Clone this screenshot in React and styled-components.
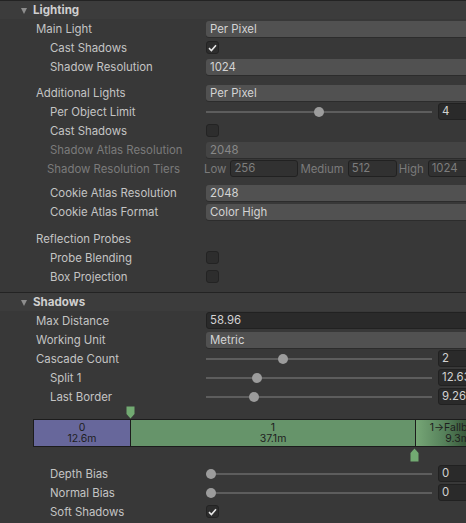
import React from "react";
import styled, { createGlobalStyle } from "styled-components";

const GlobalStyle = createGlobalStyle`
  html, body {
    margin: 0;
    padding: 0;
    background: #383838;
    overflow: hidden;
  }
  body {
    font-family: Inter, "Noto Sans", "Liberation Sans", sans-serif;
    font-size: 11.4px;
    color: #c4c4c4;
  }
`;

const Inspector = styled.div`
  width: 500px;
  background: #383838;
`;

const Header = styled.div`
  height: 18px;
  display: flex;
  align-items: center;
  background: #3c3c3c;
  border-top: 1px solid #232323;
  padding-left: 21px;
  gap: 6px;
  font-weight: 700;
  font-size: 11.6px;
  color: #cfcfcf;
`;

const Arrow = styled.span`
  width: 0;
  height: 0;
  border-left: 3.5px solid transparent;
  border-right: 3.5px solid transparent;
  border-top: 6px solid #8d8d8d;
  margin-top: 1px;
`;

const Body = styled.div`
  padding-bottom: ${(p) => p.$bottom || 0}px;
`;

const Row = styled.div`
  height: 19px;
  display: grid;
  grid-template-columns: 206px 1fr;
  align-items: center;
`;

const Label = styled.div`
  padding-left: ${(p) => p.$indent}px;
  color: ${(p) => (p.$disabled ? "#7b7b7b" : "#c4c4c4")};
  white-space: nowrap;
`;

const Value = styled.div`
  display: flex;
  align-items: center;
  height: 100%;
  margin-left: ${(p) => p.$shift || 0}px;
  min-width: 0;
`;

const Spacer = styled.div`
  height: ${(p) => p.$h}px;
`;

const Dropdown = styled.div`
  flex: 1;
  height: 16px;
  line-height: 16px;
  padding-left: 4px;
  border-radius: 3px;
  background: ${(p) => (p.$disabled ? "#444444" : "#515151")};
  color: ${(p) => (p.$disabled ? "#888888" : "#d4d4d4")};
  white-space: nowrap;
  box-shadow: 0 1px 0 #2c2c2c;
`;

const FloatField = styled.div`
  flex: ${(p) => (p.$width ? "none" : 1)};
  width: ${(p) => (p.$width ? `${p.$width}px` : "auto")};
  box-sizing: border-box;
  height: 17px;
  line-height: 15px;
  padding-left: 3px;
  border: 1px solid #212121;
  border-radius: 3px;
  background: ${(p) => (p.$disabled ? "#313131" : "#2a2a2a")};
  color: ${(p) => (p.$disabled ? "#7d7d7d" : "#d2d2d2")};
  white-space: nowrap;
  overflow: hidden;
`;

const Box = styled.div`
  width: 13px;
  height: 13px;
  box-sizing: border-box;
  border: 1px solid #232323;
  border-radius: 3px;
  background: #2d2d2d;
  display: flex;
  align-items: center;
  justify-content: center;
`;

const Check = ({ on }) => (
  <Box>
    {on && (
      <svg width="9" height="8" viewBox="0 0 9 8">
        <path d="M1 4.2 L3.4 6.5 L8 1.3" fill="none" stroke="#e6e6e6" strokeWidth="1.6" />
      </svg>
    )}
  </Box>
);

const SliderWrap = styled.div`
  flex: 1;
  display: flex;
  align-items: center;
  gap: 6px;
  height: 100%;
`;

const Track = styled.div`
  position: relative;
  flex: 1;
  height: 2px;
  background: #5d5d5d;
`;

const Knob = styled.div`
  position: absolute;
  top: -4px;
  left: ${(p) => p.$pos * 216}px;
  width: 10px;
  height: 10px;
  border-radius: 50%;
  background: #9c9c9c;
`;

const Slider = ({ pos, value }) => (
  <SliderWrap>
    <Track>
      <Knob $pos={pos} />
    </Track>
    <FloatField $width={62}>{value}</FloatField>
  </SliderWrap>
);

const TierLabel = styled.span`
  color: #7b7b7b;
  margin-right: 2px;
`;

const TierGroup = styled.div`
  display: flex;
  align-items: center;
  gap: 2px;
  flex: 1;
  min-width: 0;
`;

const Cascade = styled.div`
  position: relative;
  padding: 13px 0 17px 33px;
`;

const Bar = styled.div`
  display: flex;
  height: 28px;
  box-sizing: border-box;
  border: 1px solid #1c1c1c;
`;

const Segment = styled.div`
  flex: ${(p) => (p.$width ? "none" : 1)};
  width: ${(p) => (p.$width ? `${p.$width}px` : "auto")};
  background: ${(p) => p.$bg};
  border-left: ${(p) => (p.$first ? "none" : "1px solid #1c1c1c")};
  display: flex;
  flex-direction: column;
  align-items: center;
  justify-content: center;
  font-size: 10.5px;
  line-height: 11px;
  color: #1e1e1e;
  white-space: nowrap;
`;

const Marker = styled.svg`
  position: absolute;
  left: ${(p) => p.$x}px;
  top: ${(p) => p.$y}px;
`;

const Field = ({ label, indent = 36, disabled, children, shift }) => (
  <Row>
    <Label $indent={indent} $disabled={disabled}>
      {label}
    </Label>
    <Value $shift={shift}>{children}</Value>
  </Row>
);

export default function App() {
  return (
    <Inspector>
      <GlobalStyle />
      <Header>
        <Arrow />
        Lighting
      </Header>
      <Body $bottom={6}>
        <Field label="Main Light">
          <Dropdown>Per Pixel</Dropdown>
        </Field>
        <Field label="Cast Shadows" indent={50}>
          <Check on />
        </Field>
        <Field label="Shadow Resolution" indent={50}>
          <Dropdown>1024</Dropdown>
        </Field>
        <Spacer $h={7} />
        <Field label="Additional Lights">
          <Dropdown>Per Pixel</Dropdown>
        </Field>
        <Field label="Per Object Limit" indent={50}>
          <Slider pos={0.5} value="4" />
        </Field>
        <Field label="Cast Shadows" indent={50}>
          <Check />
        </Field>
        <Field label="Shadow Atlas Resolution" indent={50} disabled>
          <Dropdown $disabled>2048</Dropdown>
        </Field>
        <Field label="Shadow Resolution Tiers" indent={47} disabled shift={-2}>
          <TierGroup>
            <TierLabel>Low</TierLabel>
            <FloatField $width={68} $disabled>256</FloatField>
            <TierLabel>Medium</TierLabel>
            <FloatField $width={49} $disabled>512</FloatField>
            <TierLabel>High</TierLabel>
            <FloatField $disabled>1024</FloatField>
          </TierGroup>
        </Field>
        <Spacer $h={5} />
        <Field label="Cookie Atlas Resolution" indent={50}>
          <Dropdown>2048</Dropdown>
        </Field>
        <Field label="Cookie Atlas Format" indent={50}>
          <Dropdown>Color High</Dropdown>
        </Field>
        <Spacer $h={8} />
        <Field label="Reflection Probes">
          <span />
        </Field>
        <Field label="Probe Blending" indent={50}>
          <Check />
        </Field>
        <Field label="Box Projection" indent={50}>
          <Check />
        </Field>
      </Body>
      <Header>
        <Arrow />
        Shadows
      </Header>
      <Body>
        <Field label="Max Distance">
          <FloatField>58.96</FloatField>
        </Field>
        <Field label="Working Unit">
          <Dropdown>Metric</Dropdown>
        </Field>
        <Field label="Cascade Count">
          <Slider pos={1 / 3} value="2" />
        </Field>
        <Field label="Split 1" indent={50}>
          <Slider pos={0.213} value="12.63" />
        </Field>
        <Field label="Last Border" indent={50}>
          <Slider pos={0.199} value="9.264" />
        </Field>
        <Cascade>
          <Marker $x={126} $y={0} width="9" height="13" viewBox="0 0 9 13">
            <path d="M0.5 0.5 H8.5 V8 L4.5 12.5 L0.5 8 Z" fill="#72aa72" />
          </Marker>
          <Bar>
            <Segment $first $width={96} $bg="#67679b">
              <span>0</span>
              <span>12.6m</span>
            </Segment>
            <Segment $width={284} $bg="#66946a">
              <span>1</span>
              <span>37.1m</span>
            </Segment>
            <Segment $bg="linear-gradient(to right, #76a676 0%, #55805a 35%, #2e4a2e 70%, #1d2d1d 100%)">
              <span>1→Fallback</span>
              <span>9.3m</span>
            </Segment>
          </Bar>
          <Marker $x={410} $y={42} width="9" height="14" viewBox="0 0 9 14">
            <path d="M4.5 0.5 L8.5 5 V13.5 H0.5 V5 Z" fill="#72aa72" />
          </Marker>
        </Cascade>
        <Field label="Depth Bias" indent={50}>
          <Slider pos={0} value="0" />
        </Field>
        <Field label="Normal Bias" indent={50}>
          <Slider pos={0} value="0" />
        </Field>
        <Field label="Soft Shadows" indent={50}>
          <Check on />
        </Field>
      </Body>
    </Inspector>
  );
}
